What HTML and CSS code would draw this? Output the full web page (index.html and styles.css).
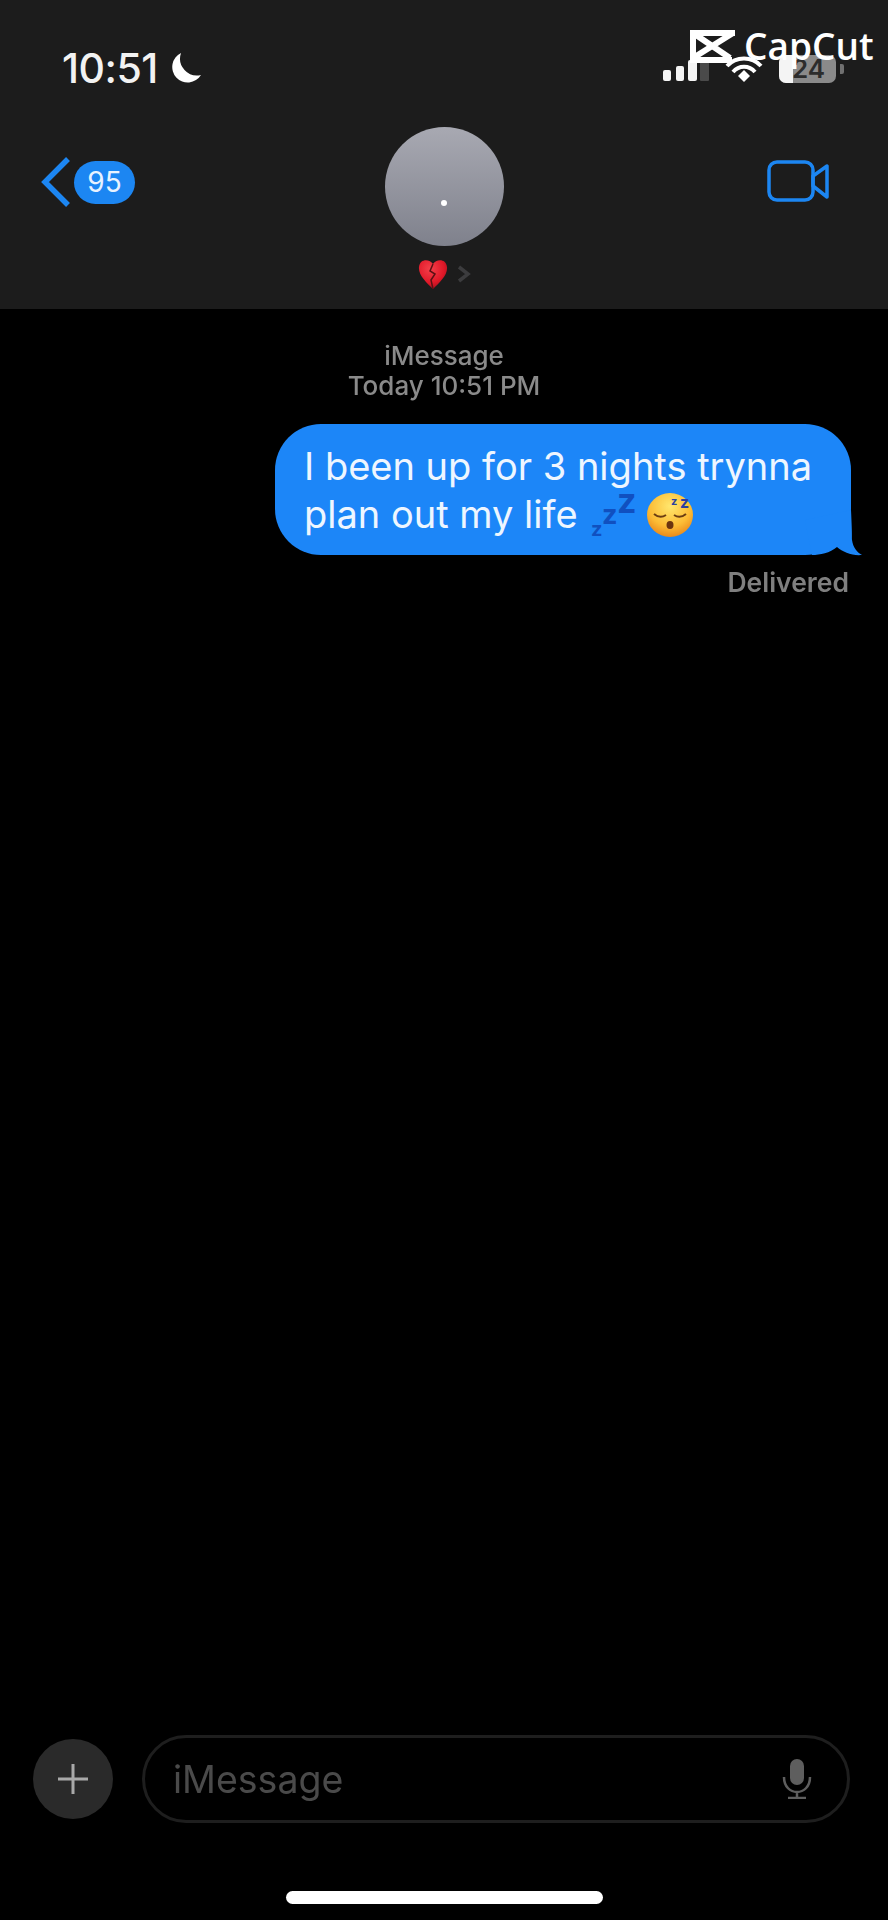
FILE: index.html
```html
<!DOCTYPE html>
<html lang="en">
<head>
    <meta charset="UTF-8">
    <meta name="viewport" content="width=device-width, initial-scale=1.0">
    <title>iMessage</title>
    <link rel="stylesheet" href="styles.css">
</head>
<body>
    <div class="app">
        <div class="header">
            <div class="status-bar">
                <div class="status-left">
                    <span class="clock">10:51</span>
                    <svg class="moon" viewBox="0 0 32 32"><path d="M11 1 A15.5 15.5 0 1 0 31 23 A17 17 0 0 1 11 1 Z" fill="#fff"/></svg>
                </div>
                <div class="status-right">
                    <svg class="signal" width="48" height="21" viewBox="0 0 48 21">
                        <rect x="1" y="10" width="8" height="11" rx="2" fill="#f4f4f4"/>
                        <rect x="14" y="6" width="8" height="15" rx="2" fill="#f4f4f4"/>
                        <rect x="26" y="0" width="9" height="21" rx="2" fill="#f4f4f4"/>
                        <rect x="38" y="2" width="9" height="19" rx="1" fill="#4a4a4a"/>
                    </svg>
                    <svg class="wifi" width="38" height="28" viewBox="0 0 38 28">
                        <path d="M2 11 C11 1 27 1 36 11" fill="none" stroke="#fff" stroke-width="4"/>
                        <path d="M8 17 C14 10 24 10 30 17" fill="none" stroke="#fff" stroke-width="4"/>
                        <path d="M13 21 L19 15 L25 21 L19 27 Z" fill="#fff"/>
                    </svg>
                    <div class="battery">
                        <div class="battery-level"></div>
                        <span class="battery-num">24</span>
                    </div>
                    <div class="battery-nub"></div>
                </div>
                <div class="watermark">
                    <svg width="46" height="35" viewBox="0 0 46 35">
                        <path d="M45 4 L3 4 L3 31 L42 31 M3 4 L40 29 M43 4 L3 29" fill="none" stroke="#fff" stroke-width="6"/>
                    </svg>
                    <span>CapCut</span>
                </div>
            </div>
            <div class="nav">
                <div class="nav-back">
                    <svg width="30" height="52" viewBox="0 0 30 52"><path d="M27 3 L4 26 L27 49" fill="none" stroke="#1c86f2" stroke-width="5.5"/></svg>
                    <span class="badge">95</span>
                </div>
                <div class="contact">
                    <div class="avatar"><span class="avatar-dot"></span></div>
                    <div class="contact-name">
                        <svg width="30" height="30" viewBox="0 0 30 30">
                            <defs>
                                <radialGradient id="heart" cx="40%" cy="30%" r="75%">
                                    <stop offset="0%" stop-color="#f4404a"/>
                                    <stop offset="65%" stop-color="#e01828"/>
                                    <stop offset="100%" stop-color="#a00f1c"/>
                                </radialGradient>
                            </defs>
                            <path d="M15 5 C12 0 2 -1 1 8 C0 16 9 24 15 30 C21 24 30 16 29 8 C28 -1 18 0 15 5 Z" fill="url(#heart)"/>
                            <path d="M15 5 L12 12 L17 15 L13 21 L15 30" fill="none" stroke="#5a1014" stroke-width="1.5"/>
                        </svg>
                        <svg width="14" height="18" viewBox="0 0 14 18"><path d="M2 2 L11 9 L2 16" fill="none" stroke="#3c3c3e" stroke-width="3.5"/></svg>
                    </div>
                </div>
                <div class="nav-video">
                    <svg width="66" height="44" viewBox="0 0 66 44">
                        <rect x="4" y="3" width="44" height="38" rx="8" fill="none" stroke="#1c86f2" stroke-width="3.5"/>
                        <path d="M48 17 L62 7 L62 38 L48 27 Z" fill="none" stroke="#1c86f2" stroke-width="3.5" stroke-linejoin="round"/>
                    </svg>
                </div>
            </div>
        </div>

        <div class="thread">
            <div class="thread-info">
                <div>iMessage</div>
                <div>Today 10:51 PM</div>
            </div>
            <div class="bubble">
                I been up for 3 nights trynna plan out my life
                <svg class="zzz" width="48" height="50" viewBox="0 0 48 50">
                    <text x="1" y="48" font-size="20">z</text>
                    <text x="12" y="36" font-size="27">z</text>
                    <text x="27" y="25" font-size="34">z</text>
                </svg>
                <svg class="sleepy" width="46" height="44" viewBox="0 0 46 44">
                    <defs>
                        <radialGradient id="face" cx="50%" cy="30%" r="70%">
                            <stop offset="0%" stop-color="#ffe76e"/>
                            <stop offset="65%" stop-color="#fcbc35"/>
                            <stop offset="100%" stop-color="#ea8a1c"/>
                        </radialGradient>
                    </defs>
                    <ellipse cx="23" cy="22" rx="23" ry="22" fill="url(#face)"/>
                    <path d="M7 21 Q13 26 19 22 M27 22 Q33 26 39 21" fill="none" stroke="#6b3d12" stroke-width="2"/>
                    <ellipse cx="23" cy="32" rx="3.5" ry="4" fill="#6b3410"/>
                    <text x="24" y="12" font-size="11">z</text>
                    <text x="33" y="15" font-size="16">z</text>
                </svg>
                <svg class="tail" width="65" height="55" viewBox="0 0 65 55"><path d="M51 5 C52 25 52 30 52 35 C53 43 58 48 62 50 C52 51 43 47 37 42 C30 48 20 50 12 50 L5 15 Z" fill="#1c86f8"/></svg>
            </div>
            <div class="delivered">Delivered</div>
        </div>

        <div class="composer">
            <div class="plus">
                <svg width="32" height="32" viewBox="0 0 32 32"><path d="M16 1 V31 M1 16 H31" stroke="#a9a9a9" stroke-width="3"/></svg>
            </div>
            <div class="input-box">
                <span class="placeholder">iMessage</span>
                <svg width="30" height="40" viewBox="0 0 30 40">
                    <rect x="8" y="0" width="14" height="26" rx="7" fill="#5e5e5e"/>
                    <path d="M2 18 C2 38 28 38 28 18 M15 32 V38 M6 39 H24" fill="none" stroke="#5e5e5e" stroke-width="2.5"/>
                </svg>
            </div>
        </div>
        <div class="home-row"><div class="home-bar"></div></div>
    </div>
</body>
</html>
```
FILE: styles.css
```css
body {
    margin: 0;
    background: #000;
    font-family: Inter, "Liberation Sans", sans-serif;
}
.app {
    width: 888px;
    height: 1920px;
    display: flex;
    flex-direction: column;
    overflow: hidden;
    filter: blur(0.6px);
}
.header {
    height: 309px;
    background: #1c1c1c;
    flex-shrink: 0;
}
.status-bar {
    position: relative;
    height: 124px;
    display: flex;
    justify-content: space-between;
    padding: 46px 44px 0 62px;
    box-sizing: border-box;
}
.status-left {
    display: flex;
    align-items: flex-start;
    gap: 12px;
}
.clock {
    color: #f2f2f2;
    font-size: 41px;
    font-weight: 500;
    line-height: 44px;
    letter-spacing: -0.5px;
}
.moon {
    width: 32px;
    height: 32px;
    margin-top: 6px;
}
.status-right {
    display: flex;
    align-items: flex-start;
    padding-top: 8px;
}
.signal {
    margin-top: 6px;
}
.wifi {
    margin: 1px 0 0 15px;
}
.battery {
    position: relative;
    width: 57px;
    height: 28px;
    margin: 1px 0 0 16px;
    background: #8a8a8a;
    border-radius: 7px;
    overflow: hidden;
}
.battery-level {
    width: 14px;
    height: 100%;
    background: #f4f4f4;
}
.battery-num {
    position: absolute;
    left: 13px;
    top: 0;
    color: #2c2c2c;
    font-size: 26px;
    font-weight: 600;
    line-height: 28px;
}
.battery-nub {
    width: 4px;
    height: 10px;
    margin: 10px 0 0 4px;
    background: #707070;
    border-radius: 0 2px 2px 0;
}
.watermark {
    position: absolute;
    left: 690px;
    top: 28px;
    display: flex;
    align-items: center;
    gap: 8px;
    color: #fff;
    font-family: "Open Sans", sans-serif;
    font-size: 37px;
    font-weight: 600;
    line-height: 36px;
}
.nav {
    display: grid;
    grid-template-columns: 1fr auto 1fr;
    align-items: start;
    padding: 3px 41px 0;
}
.nav-back {
    display: flex;
    align-items: center;
    gap: 3px;
    margin-top: 29px;
}
.badge {
    width: 61px;
    height: 43px;
    background: #1c86f2;
    border-radius: 22px;
    color: #e8f2ff;
    font-size: 28px;
    line-height: 43px;
    text-align: center;
}
.contact {
    display: flex;
    flex-direction: column;
    align-items: center;
}
.avatar {
    width: 119px;
    height: 119px;
    border-radius: 50%;
    background: linear-gradient(#a8a9b2, #7f818c);
    display: flex;
    align-items: center;
    justify-content: center;
}
.avatar-dot {
    width: 6px;
    height: 6px;
    margin-top: 32px;
    border-radius: 50%;
    background: #fff;
}
.contact-name {
    display: flex;
    align-items: center;
    gap: 9px;
    margin-top: 13px;
}
.nav-video {
    justify-self: end;
    margin: 32px 16px 0 0;
}
.thread {
    flex: 1;
    display: flex;
    flex-direction: column;
}
.thread-info {
    margin-top: 32px;
    color: #8a8a8a;
    font-size: 26px;
    font-weight: 500;
    line-height: 30px;
    text-align: center;
}
.bubble {
    position: relative;
    align-self: flex-end;
    width: 576px;
    height: 131px;
    margin: 23px 37px 0 0;
    padding: 18px 29px 0;
    box-sizing: border-box;
    background: #1c86f8;
    border-radius: 46px;
    color: #eef6ff;
    font-size: 38px;
    line-height: 48px;
}
.zzz {
    vertical-align: 2px;
    margin: -24px -2px -12px 2px;
}
.zzz text {
    fill: #1050c0;
    font-weight: 700;
}
.sleepy {
    vertical-align: 3px;
    margin: -24px 0 -12px 0;
}
.sleepy text {
    fill: #2a3fa0;
    font-weight: 700;
}
.tail {
    position: absolute;
    right: -14px;
    bottom: -5px;
}
.delivered {
    align-self: flex-end;
    margin: 12px 39px 0 0;
    color: #7f7f7f;
    font-size: 26.5px;
    font-weight: 600;
    line-height: 30px;
}
.composer {
    display: flex;
    align-items: center;
    gap: 29px;
    padding: 0 38px 0 33px;
}
.plus {
    width: 80px;
    height: 80px;
    border-radius: 50%;
    background: #2a2a2a;
    display: flex;
    align-items: center;
    justify-content: center;
}
.input-box {
    flex: 1;
    height: 88px;
    display: flex;
    align-items: center;
    justify-content: space-between;
    padding: 0 35px 0 28px;
    border: 3px solid #1e1e1e;
    border-radius: 44px;
    box-sizing: border-box;
}
.placeholder {
    color: #4a4a4a;
    font-size: 37.5px;
}
.home-row {
    height: 97px;
    display: flex;
    justify-content: center;
    padding-top: 68px;
    box-sizing: border-box;
}
.home-bar {
    width: 317px;
    height: 13px;
    background: #fff;
    border-radius: 7px;
}
```
